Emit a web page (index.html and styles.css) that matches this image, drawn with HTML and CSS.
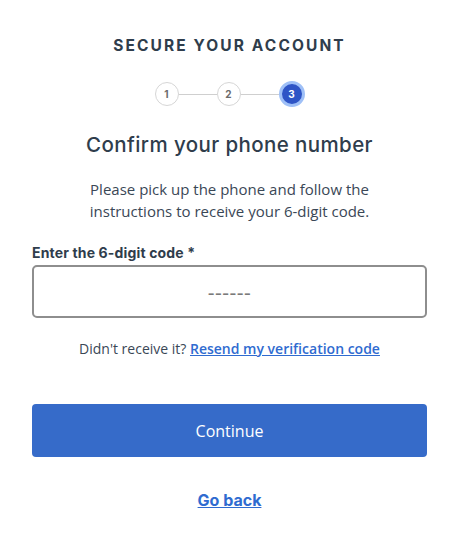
FILE: index.html
```html
<!DOCTYPE html>
<html>
<head>
<meta charset="utf-8">
<link rel="stylesheet" href="styles.css">
</head>
<body>
<main class="page">
  <h1 class="eyebrow">SECURE YOUR ACCOUNT</h1>
  <div class="steps">
    <span class="step">1</span>
    <span class="line"></span>
    <span class="step">2</span>
    <span class="line"></span>
    <span class="step active">3</span>
  </div>
  <h2 class="title">Confirm your phone number</h2>
  <p class="intro">Please pick up the phone and follow the<br>instructions to receive your 6-digit code.</p>
  <label class="label" for="code">Enter the 6-digit code *</label>
  <input class="code" id="code" type="text" placeholder="------">
  <p class="resend">Didn't receive it? <a href="#">Resend my verification code</a></p>
  <button class="primary">Continue</button>
  <a class="back" href="#">Go back</a>
</main>
</body>
</html>
```
FILE: styles.css
```css
html, body {
  margin: 0;
  padding: 0;
  background: #ffffff;
}
.page {
  display: flex;
  flex-direction: column;
  align-items: center;
  padding: 36px 33px 0 32px;
  font-family: "Open Sans", sans-serif;
  color: #2f3d4c;
}
.eyebrow {
  margin: 0;
  font-family: "Inter", sans-serif;
  font-weight: 700;
  font-size: 15.5px;
  line-height: 20px;
  letter-spacing: 2.1px;
  color: #2f3d4c;
}
.steps {
  display: flex;
  align-items: center;
  margin-top: 25px;
}
.step {
  width: 22px;
  height: 22px;
  border: 1px solid #d6d6d6;
  border-radius: 50%;
  display: flex;
  align-items: center;
  justify-content: center;
  font-family: "Inter", sans-serif;
  font-weight: 700;
  font-size: 10px;
  color: #6b6b6b;
  background: #fff;
}
.step.active {
  width: 20px;
  height: 20px;
  background: #2e54c6;
  border: 3px solid #9fc0f7;
  color: #ffffff;
}
.line {
  width: 38px;
  height: 1px;
  background: #cfcfcf;
}
.title {
  margin: 24px 0 0;
  font-family: "Inter", sans-serif;
  font-weight: 500;
  font-size: 20.5px;
  line-height: 28px;
  letter-spacing: 0.4px;
  color: #2f3d4c;
}
.intro {
  margin: 19px 0 0;
  text-align: center;
  font-size: 15px;
  line-height: 22px;
  color: #3a4756;
}
.label {
  align-self: stretch;
  margin-top: 22px;
  font-family: "Inter", sans-serif;
  font-weight: 700;
  font-size: 14px;
  line-height: 18px;
  letter-spacing: 0.15px;
  color: #2f3d4c;
}
.code {
  box-sizing: border-box;
  align-self: stretch;
  margin-top: 3px;
  height: 53px;
  border: 2px solid #8e8e8e;
  border-radius: 5px;
  text-align: center;
  font-family: "Open Sans", sans-serif;
  font-size: 21px;
  outline: none;
}
.code::placeholder {
  color: #7a7a7a;
  letter-spacing: 0.5px;
}
.resend {
  margin: 20px 0 0;
  font-size: 14px;
  line-height: 22px;
  color: #3a4756;
}
.resend a {
  color: #2f6bd0;
  font-weight: 600;
  text-decoration: underline;
}
.primary {
  align-self: stretch;
  margin-top: 44px;
  height: 53px;
  border: none;
  border-radius: 4px;
  background: #366bc9;
  color: #ffffff;
  font-family: "Open Sans", sans-serif;
  font-size: 16px;
}
.back {
  margin-top: 33px;
  font-family: "Inter", sans-serif;
  font-weight: 700;
  font-size: 16px;
  color: #2f6bd0;
  text-decoration: underline;
}
```
